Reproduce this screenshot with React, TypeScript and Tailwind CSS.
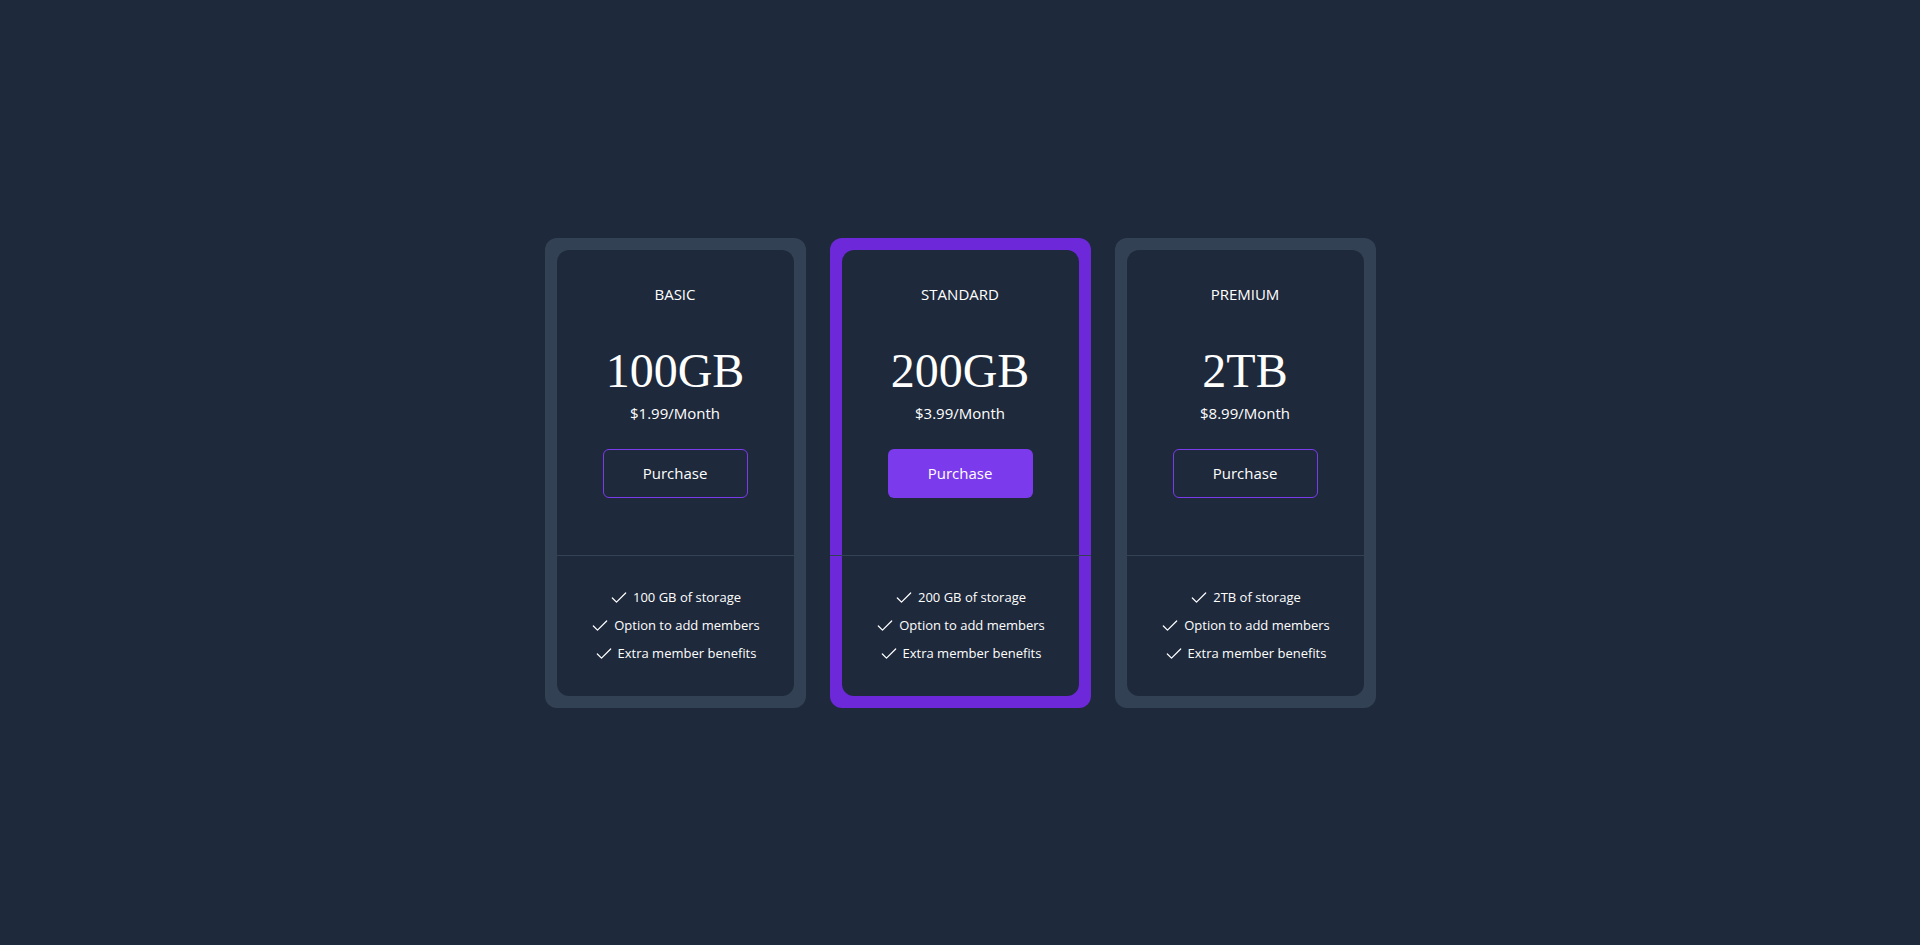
import { Check } from "lucide-react";

interface Plan {
  name: string;
  size: string;
  price: string;
  features: string[];
  featured?: boolean;
}

const plans: Plan[] = [
  {
    name: "BASIC",
    size: "100GB",
    price: "$1.99/Month",
    features: ["100 GB of storage", "Option to add members", "Extra member benefits"],
  },
  {
    name: "STANDARD",
    size: "200GB",
    price: "$3.99/Month",
    features: ["200 GB of storage", "Option to add members", "Extra member benefits"],
    featured: true,
  },
  {
    name: "PREMIUM",
    size: "2TB",
    price: "$8.99/Month",
    features: ["2TB of storage", "Option to add members", "Extra member benefits"],
  },
];

function PlanCard({ plan }: { plan: Plan }) {
  return (
    <div
      className={`w-[261px] rounded-xl p-3 ${plan.featured ? "bg-[#6d28d9]" : "bg-[#334155]"}`}
    >
      <div className="rounded-xl bg-[#1e293b] text-white">
        {/* top section */}
        <div className="flex flex-col items-center pt-[34px] pb-[57px]">
          <h3 className="text-[15px] leading-5">{plan.name}</h3>
          <div className="mt-[43px] font-['Liberation_Serif',serif] text-5xl leading-none oldstyle-nums">
            {plan.size}
          </div>
          <p className="mt-[8px] text-[15px] leading-5">{plan.price}</p>
          <button
            className={`mt-[26px] h-[49px] w-[145px] rounded-md text-[15px] text-white ${
              plan.featured ? "bg-[#7c3aed]" : "border border-[#7c3aed]"
            }`}
          >
            Purchase
          </button>
        </div>

        <div className="-mx-3 h-px bg-[#334155]" />

        {/* features */}
        <ul className="flex flex-col items-center py-7 text-[13px]">
          {plan.features.map((f) => (
            <li key={f} className="flex h-[28px] items-center gap-1">
              <Check size={20} strokeWidth={1.5} />
              <span>{f}</span>
            </li>
          ))}
        </ul>
      </div>
    </div>
  );
}

export default function App() {
  return (
    <div className="flex min-h-screen items-center justify-center bg-[#1e293b] font-['Open_Sans',sans-serif]">
      <div className="flex gap-6">
        {plans.map((p) => (
          <PlanCard key={p.name} plan={p} />
        ))}
      </div>
    </div>
  );
}
